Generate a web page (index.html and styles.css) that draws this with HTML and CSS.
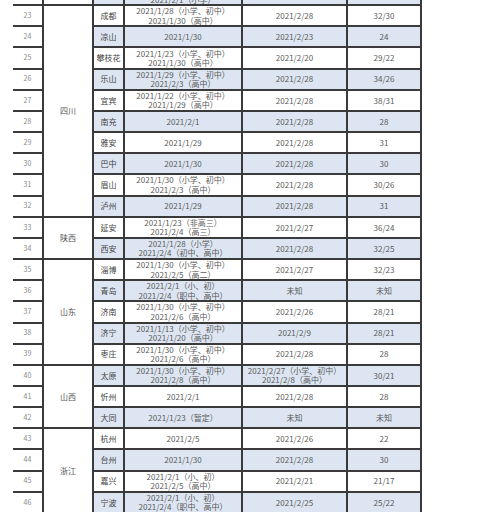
FILE: index.html
```html
<!DOCTYPE html>
<html lang="zh">
<head>
<meta charset="utf-8">
<link rel="stylesheet" href="styles.css">
</head>
<body>
<div class="clip">
<table class="sheet">
<colgroup>
<col class="c-num"><col class="c-prov"><col class="c-city"><col class="c-start"><col class="c-end"><col class="c-days">
</colgroup>
<tbody>
<tr class="even"><td class="num">22</td><td class="prov"></td><td class="city">重庆</td><td class="d">2021/1/25（初中）<br>2021/2/1（小学）</td><td class="d">2021/2/28</td><td class="d">28</td></tr>
<tr><td class="num">23</td><td class="prov" rowspan="10">四川</td><td class="city">成都</td><td class="d">2021/1/28（小学、初中）<br>2021/1/30（高中）</td><td class="d">2021/2/28</td><td class="d">32/30</td></tr>
<tr class="even"><td class="num">24</td><td class="city">凉山</td><td class="d">2021/1/30</td><td class="d">2021/2/23</td><td class="d">24</td></tr>
<tr><td class="num">25</td><td class="city">攀枝花</td><td class="d">2021/1/23（小学、初中）<br>2021/1/30（高中）</td><td class="d">2021/2/20</td><td class="d">29/22</td></tr>
<tr class="even"><td class="num">26</td><td class="city">乐山</td><td class="d">2021/1/29（小学、初中）<br>2021/2/3（高中）</td><td class="d">2021/2/28</td><td class="d">34/26</td></tr>
<tr><td class="num">27</td><td class="city">宜宾</td><td class="d">2021/1/22（小学、初中）<br>2021/1/29（高中）</td><td class="d">2021/2/28</td><td class="d">38/31</td></tr>
<tr class="even"><td class="num">28</td><td class="city">南充</td><td class="d">2021/2/1</td><td class="d">2021/2/28</td><td class="d">28</td></tr>
<tr><td class="num">29</td><td class="city">雅安</td><td class="d">2021/1/29</td><td class="d">2021/2/28</td><td class="d">31</td></tr>
<tr class="even"><td class="num">30</td><td class="city">巴中</td><td class="d">2021/1/30</td><td class="d">2021/2/28</td><td class="d">30</td></tr>
<tr><td class="num">31</td><td class="city">眉山</td><td class="d">2021/1/30（小学、初中）<br>2021/2/3（高中）</td><td class="d">2021/2/28</td><td class="d">30/26</td></tr>
<tr class="even"><td class="num">32</td><td class="city">泸州</td><td class="d">2021/1/29</td><td class="d">2021/2/28</td><td class="d">31</td></tr>
<tr><td class="num">33</td><td class="prov" rowspan="2">陕西</td><td class="city">延安</td><td class="d">2021/1/23（非高三）<br>2021/2/4（高三）</td><td class="d">2021/2/27</td><td class="d">36/24</td></tr>
<tr class="even"><td class="num">34</td><td class="city">西安</td><td class="d">2021/1/28（小学）<br>2021/2/4（初中、高中）</td><td class="d">2021/2/28</td><td class="d">32/25</td></tr>
<tr><td class="num">35</td><td class="prov" rowspan="5">山东</td><td class="city">淄博</td><td class="d">2021/1/30（小学、初中）<br>2021/2/5（高二）</td><td class="d">2021/2/27</td><td class="d">32/23</td></tr>
<tr class="even"><td class="num">36</td><td class="city">青岛</td><td class="d">2021/2/1（小、初）<br>2021/2/4（职中、高中）</td><td class="d">未知</td><td class="d">未知</td></tr>
<tr><td class="num">37</td><td class="city">济南</td><td class="d">2021/1/30（小学、初中）<br>2021/2/6（高中）</td><td class="d">2021/2/26</td><td class="d">28/21</td></tr>
<tr class="even"><td class="num">38</td><td class="city">济宁</td><td class="d">2021/1/13（小学、初中）<br>2021/1/20（高中）</td><td class="d">2021/2/9</td><td class="d">28/21</td></tr>
<tr><td class="num">39</td><td class="city">枣庄</td><td class="d">2021/1/30（小学、初中）<br>2021/2/6（高中）</td><td class="d">2021/2/28</td><td class="d">28</td></tr>
<tr class="even"><td class="num">40</td><td class="prov" rowspan="3">山西</td><td class="city">太原</td><td class="d">2021/1/30（小学、初中）<br>2021/2/8（高中）</td><td class="d">2021/2/27（小学、初中）<br>2021/2/8（高中）</td><td class="d">30/21</td></tr>
<tr><td class="num">41</td><td class="city">忻州</td><td class="d">2021/2/1</td><td class="d">2021/2/28</td><td class="d">28</td></tr>
<tr class="even"><td class="num">42</td><td class="city">大同</td><td class="d">2021/1/23（暂定）</td><td class="d">未知</td><td class="d">未知</td></tr>
<tr><td class="num">43</td><td class="prov" rowspan="4">浙江</td><td class="city">杭州</td><td class="d">2021/2/5</td><td class="d">2021/2/26</td><td class="d">22</td></tr>
<tr class="even"><td class="num">44</td><td class="city">台州</td><td class="d">2021/1/30</td><td class="d">2021/2/28</td><td class="d">30</td></tr>
<tr><td class="num">45</td><td class="city">嘉兴</td><td class="d">2021/2/1（小、初）<br>2021/2/5（高中）</td><td class="d">2021/2/21</td><td class="d">21/17</td></tr>
<tr class="even"><td class="num">46</td><td class="city">宁波</td><td class="d">2021/2/1（小、初）<br>2021/2/4（职中、高中）</td><td class="d">2021/2/25</td><td class="d">25/22</td></tr>
</tbody>
</table>
</div>
</body>
</html>
```
FILE: styles.css
```css
html, body {
  margin: 0;
  padding: 0;
  background: #ffffff;
}
.clip {
  height: 512px;
  overflow: hidden;
  padding-left: 13px;
}
.sheet {
  border-collapse: collapse;
  table-layout: fixed;
  width: 408px;
  margin-top: -17px;
  font-family: "Noto Sans CJK SC", "Noto Sans", sans-serif;
  font-size: 8px;
  line-height: 9.5px;
  color: #5a5a5a;
}
.c-num { width: 30px; }
.c-prov { width: 50px; }
.c-city { width: 31px; }
.c-start { width: 118px; }
.c-end { width: 105px; }
.c-days { width: 74px; }
.sheet tr { height: 21.17px; }
.sheet td {
  border: 2px solid #3a3a3a;
  padding: 0;
  text-align: center;
  vertical-align: middle;
  white-space: nowrap;
  overflow: hidden;
}
.sheet td.num {
  border-left: none;
  color: #8a8a8a;
  font-size: 7px;
}
.sheet td.prov {
  color: #555;
}
.sheet td.city {
  color: #444;
}
.even td.city,
.even td.d {
  background: #dce5f1;
}
```
